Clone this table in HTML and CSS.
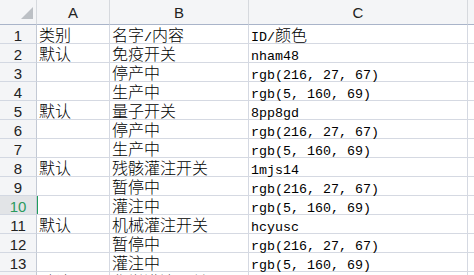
FILE: index.html
```html
<!DOCTYPE html>
<html lang="zh">
<head>
<meta charset="utf-8">
<title>Sheet</title>
<link rel="stylesheet" href="styles.css">
</head>
<body>
<div class="sheet">
  <div class="corner"><span class="tri"></span></div>
  <div class="ch">A</div>
  <div class="ch">B</div>
  <div class="ch">C</div>
  <div class="ch ch-last"></div>

  <div class="rh">1</div><div class="c">类别</div><div class="c">名字<span class="m">/</span>内容</div><div class="c"><span class="m">ID/</span>颜色</div><div class="c c-last"></div>
  <div class="rh">2</div><div class="c">默认</div><div class="c">免疫开关</div><div class="c"><span class="m">nham48</span></div><div class="c c-last"></div>
  <div class="rh">3</div><div class="c"></div><div class="c">停产中</div><div class="c"><span class="m">rgb(216, 27, 67)</span></div><div class="c c-last"></div>
  <div class="rh">4</div><div class="c"></div><div class="c">生产中</div><div class="c"><span class="m">rgb(5, 160, 69)</span></div><div class="c c-last"></div>
  <div class="rh">5</div><div class="c">默认</div><div class="c">量子开关</div><div class="c"><span class="m">8pp8gd</span></div><div class="c c-last"></div>
  <div class="rh">6</div><div class="c"></div><div class="c">停产中</div><div class="c"><span class="m">rgb(216, 27, 67)</span></div><div class="c c-last"></div>
  <div class="rh">7</div><div class="c"></div><div class="c">生产中</div><div class="c"><span class="m">rgb(5, 160, 69)</span></div><div class="c c-last"></div>
  <div class="rh">8</div><div class="c">默认</div><div class="c">残骸灌注开关</div><div class="c"><span class="m">1mjs14</span></div><div class="c c-last"></div>
  <div class="rh">9</div><div class="c"></div><div class="c">暂停中</div><div class="c"><span class="m">rgb(216, 27, 67)</span></div><div class="c c-last"></div>
  <div class="rh rh-active">10</div><div class="c c-active"></div><div class="c">灌注中</div><div class="c"><span class="m">rgb(5, 160, 69)</span></div><div class="c c-last"></div>
  <div class="rh">11</div><div class="c">默认</div><div class="c">机械灌注开关</div><div class="c"><span class="m">hcyusc</span></div><div class="c c-last"></div>
  <div class="rh">12</div><div class="c"></div><div class="c">暂停中</div><div class="c"><span class="m">rgb(216, 27, 67)</span></div><div class="c c-last"></div>
  <div class="rh">13</div><div class="c"></div><div class="c">灌注中</div><div class="c"><span class="m">rgb(5, 160, 69)</span></div><div class="c c-last"></div>
  <div class="rh">14</div><div class="c">默认</div><div class="c">化学灌注开关</div><div class="c"><span class="m">woaxre</span></div><div class="c c-last"></div>
</div>
</body>
</html>
```
FILE: styles.css
```css
html, body {
  margin: 0;
  padding: 0;
  background: #ffffff;
  overflow: hidden;
}

.sheet {
  display: grid;
  grid-template-columns: 37px 73px 139px 219px 6px;
  grid-template-rows: 25px repeat(14, 19px);
  width: 474px;
}

.sheet > div {
  box-sizing: border-box;
}

.corner {
  background: #f4f5f7;
  border-right: 1px solid #d6d9de;
  border-bottom: 1px solid #a9b4c9;
  position: relative;
}

.tri {
  position: absolute;
  left: 21px;
  top: 7px;
  width: 0;
  height: 0;
  border-left: 12px solid transparent;
  border-bottom: 12px solid #bcc0c5;
}

.ch {
  background: #f4f5f7;
  border-right: 1px solid #d6d9de;
  border-bottom: 1px solid #a9b4c9;
  font-family: "Liberation Sans", Arial, sans-serif;
  font-size: 15px;
  color: #222222;
  text-align: center;
  line-height: 24px;
  padding-top: 1px;
}

.ch-last {
  border-right: none;
}

.rh {
  background: #f4f5f7;
  border-right: 1px solid #c3c9d4;
  border-bottom: 1px solid #d3d8e2;
  font-family: "Liberation Sans", Arial, sans-serif;
  font-size: 15px;
  color: #222222;
  text-align: center;
  line-height: 22px;
}

.rh-active {
  background: #e2e4e7;
  color: #2a9a5e;
}

.c {
  border-right: 1px solid #d5d9e2;
  border-bottom: 1px solid #d5d9e2;
  font-family: "Noto Sans CJK SC", "Noto Sans CJK JP", sans-serif;
  font-weight: 300;
  font-size: 16px;
  line-height: 18px;
  color: #000000;
  padding-left: 2px;
  white-space: nowrap;
}

.c-last {
  border-right: none;
}

.c-active {
  box-shadow: inset 1px 0 0 #1f9d5c;
}

.m {
  font-family: "Liberation Mono", "DejaVu Sans Mono", monospace;
  font-weight: 400;
  font-size: 13.33px;
  line-height: 18px;
}
```
